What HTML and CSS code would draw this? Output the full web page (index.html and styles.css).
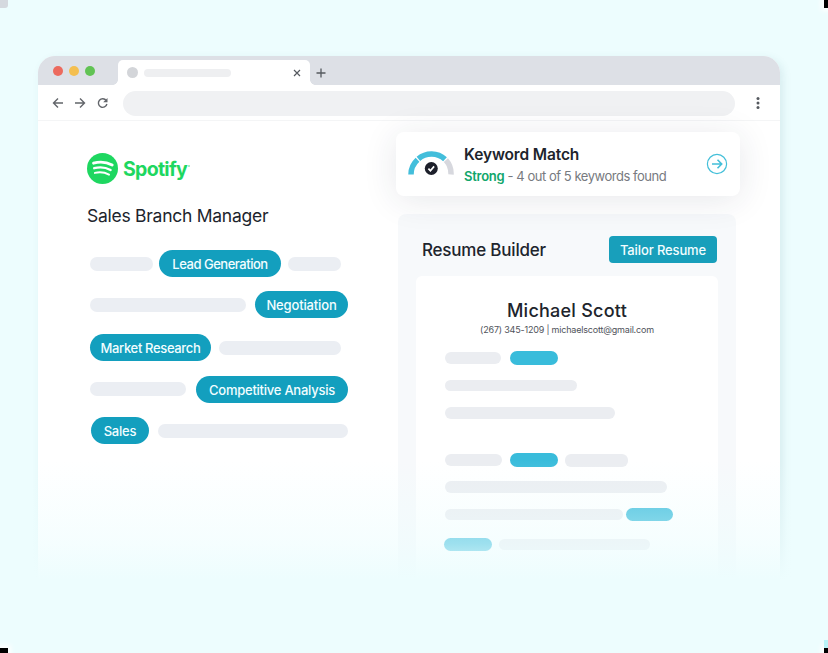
FILE: index.html
```html
<!DOCTYPE html>
<html lang="en">
<head>
<meta charset="utf-8">
<title>Keyword Match</title>
<link rel="stylesheet" href="styles.css">
</head>
<body>
<div class="canvas">
  <div class="browser">
    <div class="tabstrip">
      <div class="lights"><i class="red"></i><i class="amber"></i><i class="green"></i></div>
      <div class="tab">
        <i class="favicon"></i><i class="tabtitle"></i>
        <svg class="close" width="8" height="8" viewBox="0 0 8 8"><path d="M1 1l6 6M7 1l-6 6"/></svg>
      </div>
      <svg class="plus" width="10" height="10" viewBox="0 0 10 10"><path d="M5 .5v9M.5 5h9"/></svg>
    </div>
    <div class="toolbar">
      <svg class="nav" width="60" height="14" viewBox="0 0 60 14"><path d="M11 7H1.500M6 2.500L1.500 7L6 11.500M23 7h9.500M28 2.500L32.500 7L28 11.500M54.200 4.500A4.300 4.300 0 1 0 54.900 8"/><path class="tip" d="M55.500 2v4.300h-4.300z"/></svg>
      <div class="address"></div>
      <svg class="dots" width="4" height="12" viewBox="0 0 4 12"><circle cx="2" cy="1.600" r="1.500"/><circle cx="2" cy="6" r="1.500"/><circle cx="2" cy="10.400" r="1.500"/></svg>
    </div>
    <div class="page">
      <section class="job">
        <div class="brand">
          <svg width="31" height="31" viewBox="0 0 31 31"><circle cx="15.500" cy="15.500" r="15.500"/><path class="w1" d="M6.500 10.200Q16.500 7.300 25.200 12.100"/><path class="w2" d="M7.200 15.200Q16 12.900 23.600 17"/><path class="w3" d="M7.900 19.900Q15.500 18.100 22 21.600"/></svg>
          <span class="wordmark">Spotify</span><i class="reg"></i>
        </div>
        <h1>Sales Branch Manager</h1>
        <div class="lines">
          <div class="row"><i class="bar b63"></i><span class="pill lead">Lead Generation</span><i class="bar b53"></i></div>
          <div class="row"><i class="bar b156"></i><span class="pill nego">Negotiation</span></div>
          <div class="row"><span class="pill market">Market Research</span><i class="bar b122"></i></div>
          <div class="row"><i class="bar b96"></i><span class="pill comp">Competitive Analysis</span></div>
          <div class="row"><span class="pill sales">Sales</span><i class="bar b190"></i></div>
        </div>
      </section>
      <section class="side">
        <div class="match">
          <svg class="gauge" width="46" height="28" viewBox="0 0 46 28"><path class="on" d="M3 23.500A20 20 0 0 1 9.500 8.700M10.400 7.900A20 20 0 0 1 37 8.300"/><path class="off" d="M37.900 9.200A20 20 0 0 1 43 23.500"/><circle cx="23.300" cy="17.500" r="6.500"/><path class="tick" d="M20.400 17.700l2 2 3.700-4.300"/></svg>
          <div class="matchtext"><h2>Keyword Match</h2><p><b>Strong</b> <span>- 4 out of 5 keywords found</span></p></div>
          <svg class="go" width="22" height="22" viewBox="0 0 22 22"><circle cx="11" cy="11" r="9.600"/><path d="M6 11h9.500M11.500 6.800L15.700 11l-4.200 4.200"/></svg>
        </div>
        <div class="builder">
          <header><h2>Resume Builder</h2><span class="button">Tailor Resume</span></header>
          <div class="doc">
            <h3>Michael Scott</h3>
            <p>(267) 345-1209 | michaelscott@gmail.com</p>
            <div class="docrows">
              <div class="row"><i class="line l56"></i><i class="hit"></i></div>
              <div class="row"><i class="line l132"></i></div>
              <div class="row"><i class="line l170"></i></div>
              <div class="row"><i class="line l57"></i><i class="hit h8"></i><i class="line l63"></i></div>
              <div class="row"><i class="line l222"></i></div>
              <div class="row"><i class="line l178"></i><i class="hit h4"></i></div>
              <div class="row last"><i class="hit h0"></i><i class="line l151"></i></div>
            </div>
          </div>
        </div>
      </section>
    </div>
  </div>
  <div class="fade"></div>
  <i class="corner tl"></i><i class="corner tr"></i><i class="corner bl"></i><i class="corner br"></i>
</div>
</body>
</html>
```
FILE: styles.css
```css
* { box-sizing: border-box; margin: 0; }
body { font-family: Inter, "Liberation Sans", sans-serif; color: #20242c; }
i { display: block; flex: none; }
svg { display: block; flex: none; fill: none; }
.canvas { position: relative; width: 828px; height: 653px; overflow: hidden; padding: 56px 48px 0 37.5px; background: #edfdfe; }
.browser { height: 560px; border-radius: 17px 17px 0 0; background: #fff; box-shadow: 3px 3px 8px rgba(70, 120, 140, .13); }

.tabstrip { display: flex; height: 29px; border-radius: 17px 17px 0 0; background: #dde0e6; }
.lights { display: flex; gap: 6px; width: 80.5px; padding: 10px 0 0 15.5px; }
.lights i { width: 10px; height: 10px; border-radius: 50%; }
.red { background: #ec6a5e; }
.amber { background: #f4bf50; }
.green { background: #61c354; }
.tab { position: relative; display: flex; align-items: center; width: 192px; height: 25px; margin-top: 4px; padding: 0 9px 0 9px; border-radius: 5px 5px 0 0; background: #fff; }
.tab::before, .tab::after { content: ""; position: absolute; bottom: 0; width: 5px; height: 5px; }
.tab::before { left: -5px; background: radial-gradient(circle at 0 0, transparent 4.5px, #fff 5px); }
.tab::after { right: -5px; background: radial-gradient(circle at 100% 0, transparent 4.5px, #fff 5px); }
.favicon { width: 11px; height: 11px; border-radius: 50%; background: #d3d5d9; }
.tabtitle { width: 87px; height: 8px; margin-left: 6px; border-radius: 4px; background: #eeeff1; }
.close { margin-left: auto; stroke: #55595f; stroke-width: 1.2; }
.plus { margin: 11.5px 0 0 6px; stroke: #55595f; stroke-width: 1.3; }
.toolbar { display: flex; align-items: center; height: 36px; padding: 0 20.5px 0 14.5px; border-bottom: 1px solid #f4f5f6; }
.nav { stroke: #62656a; stroke-width: 1.4; }
.nav .tip { fill: #62656a; stroke: none; }
.address { width: 612px; height: 25px; margin: 1px 0 0 11px; border-radius: 13px; background: #f0f1f3; }
.dots { margin-left: auto; fill: #55595f; }

.page { display: flex; }
.job { width: 358.5px; padding: 32px 0 0 49.5px; }
.brand { display: flex; height: 31px; }
.brand svg { fill: #1ed760; }
.brand path { fill: none; stroke: #fff; stroke-linecap: round; }
.w1 { stroke-width: 2.8; }
.w2 { stroke-width: 2.4; }
.w3 { stroke-width: 2; }
.wordmark { margin-left: 5px; font: 700 19.5px/32px Inter, sans-serif; letter-spacing: -.7px; color: #1ed760; }
.reg { width: 2px; height: 2px; margin: 12px 0 0 1px; border-radius: 50%; background: #8eebb0; }
.job h1 { margin-top: 20px; font-size: 17.5px; line-height: 23px; font-weight: 400; letter-spacing: -.26px; white-space: nowrap; }
.lines { display: grid; grid-template-rows: 41px 43px 41.5px 41.5px 27px; margin-top: 23px; padding-left: 3px; }
.row { display: flex; align-items: center; }
.lines .row { height: 27px; }
.bar { height: 14px; border-radius: 7px; background: #ebeef3; }
.b63 { width: 63px; }
.b53 { width: 53px; margin-left: 6.5px; }
.b156 { width: 156px; }
.b122 { width: 122px; margin-left: 8px; }
.b96 { width: 96px; }
.b190 { width: 190px; margin-left: 9px; }
.pill { flex: none; height: 27px; border-radius: 14px; background: #139fbe; color: #f2fdff; font-size: 13px; line-height: 28px; font-weight: 500; letter-spacing: -.2px; text-align: center; white-space: nowrap; }
.lead { width: 122px; margin-left: 6px; letter-spacing: -.48px; }
.nego { width: 93px; margin-left: 9px; letter-spacing: -.15px; }
.market { width: 121px; letter-spacing: -.35px; }
.comp { width: 152px; margin-left: 10px; letter-spacing: -.25px; }
.sales { width: 58px; margin-left: 1px; }

.side { width: 344px; padding-top: 11px; }
.match { position: relative; display: flex; height: 64px; padding-left: 12px; border-radius: 8px; background: #fff; box-shadow: 0 4px 34px rgba(40, 50, 75, .11); }
.gauge { margin-top: 19px; }
.gauge path { stroke-width: 5.5; }
.gauge .on { stroke: #43bedb; }
.gauge .off { stroke: #d7d8de; }
.gauge circle { fill: #1d202b; }
.gauge .tick { stroke: #fff; stroke-width: 1.7; }
.matchtext { padding: 12px 0 0 10px; white-space: nowrap; }
.matchtext h2 { font-size: 15.5px; line-height: 21px; font-weight: 600; letter-spacing: -.13px; }
.matchtext p { font-size: 13px; line-height: 22px; letter-spacing: -.47px; color: #777a80; }
.matchtext b { font-weight: 600; letter-spacing: -.25px; color: #10a66b; }
.go { margin: 21px 12px 0 auto; stroke: #43bfd9; stroke-width: 1.2; }
.go path { stroke-width: 1.6; }
.builder { width: 338px; margin: 18px 0 0 2px; padding: 22px 18px 0; border-radius: 8px; background: rgba(244, 247, 250, .7); }
.builder header { display: flex; align-items: center; justify-content: space-between; height: 28px; padding: 0 1px 0 6px; }
.builder h2 { font-size: 17px; font-weight: 500; line-height: 30px; letter-spacing: -.2px; white-space: nowrap; }
.button { width: 108px; height: 27px; margin-top: -1px; border-radius: 4px; background: #189fbb; color: #f2fdff; font-size: 13px; line-height: 28px; font-weight: 500; letter-spacing: -.12px; text-align: center; white-space: nowrap; }
.doc { height: 380px; margin-top: 12px; padding: 23px 29px 0; border-radius: 6px; background: #fff; text-align: center; white-space: nowrap; }
.doc h3 { font-size: 18px; line-height: 24px; font-weight: 500; letter-spacing: .24px; }
.doc p { font-size: 9px; line-height: 13px; letter-spacing: -.19px; color: #4f535b; }
.docrows { display: grid; grid-template-rows: 27.5px 27.5px 47px 27px 27.5px 30px 14px; margin-top: 15px; }
.docrows .row { height: 14px; }
.line { height: 11.5px; border-radius: 6px; background: #ebedf1; }
.hit { width: 48px; height: 13.5px; margin-left: 9px; border-radius: 7px; background: #39bcdb; }
.h8 { margin-left: 8px; }
.h4 { width: 47px; height: 12.5px; margin-left: 3px; }
.h0 { margin-left: -.6px; }
.l56 { width: 56px; }
.l132 { width: 132px; }
.l170 { width: 170px; }
.l57 { width: 57px; }
.l63 { width: 63px; height: 13px; margin-left: 7px; }
.l222 { width: 222px; }
.l178 { width: 178px; }
.l151 { width: 151px; margin-left: 7px; }

.fade { position: absolute; left: 0; right: 0; top: 460px; bottom: 0; background: linear-gradient(rgba(237, 253, 254, 0), rgba(237, 253, 254, .35) 55px, rgba(237, 253, 254, .56) 84px, #edfdfe 120px); }
.corner { position: absolute; }
.tl { left: 0; top: 0; width: 8px; height: 8px; background: #d5d9df; border-radius: 0 0 3px 0; }
.tr { right: 0; top: 0; width: 4px; height: 8px; background: #000; box-shadow: 0 0 5px 3px #fff; }
.bl { left: 0; bottom: 0; width: 8px; height: 5px; background: #000; box-shadow: 0 0 5px 3px #fff; }
.br { right: 0; bottom: 0; width: 4px; height: 5px; background: #000; box-shadow: 0 0 5px 3px #fff; }
.br::before { content: ""; position: absolute; left: 0; top: -8px; width: 4px; height: 8px; background: #b9f3f8; }
```
